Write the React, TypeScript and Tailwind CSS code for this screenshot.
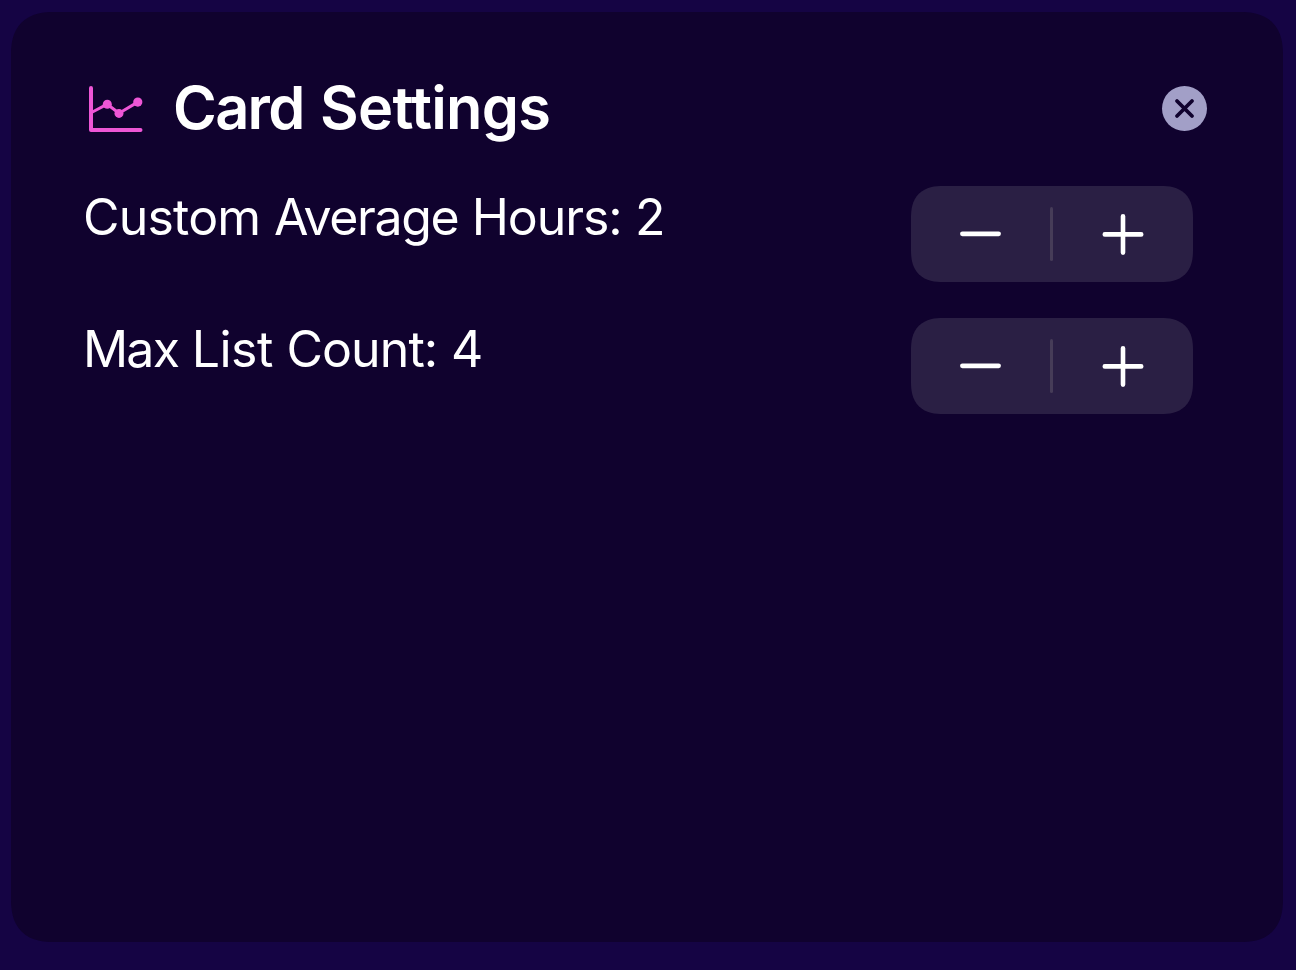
import React from "react";

function ChartIcon() {
  return (
    <svg width="60" height="52" viewBox="86 82 60 52" fill="none" stroke="#ee56d6" strokeLinecap="round" strokeLinejoin="round" aria-hidden="true">
      <path d="M91 88V130H140.5" strokeWidth="4" />
      <path d="M91.5 112.5L107.3 104.2L119 113.3L137.7 102.1" strokeWidth="3" />
      <g fill="#ee56d6" stroke="none">
        <circle cx="107.3" cy="104.2" r="4.5" />
        <circle cx="119" cy="113.4" r="4.5" />
        <circle cx="137.8" cy="102.1" r="4.6" />
      </g>
    </svg>
  );
}

function Stepper({ label }: { label: string }) {
  return (
    <div role="group" aria-label={label} className="flex h-24 w-[282px] items-center rounded-[32px] bg-[#2a1f44] [corner-shape:superellipse(1.3)]">
      <button aria-label="Decrease" className="flex h-full w-[139px] items-center justify-center">
        <svg width="42" height="42" viewBox="0 0 42 42" fill="none" stroke="white" strokeWidth="4.7" strokeLinecap="round">
          <path d="M2.4 20.8H38.6" />
        </svg>
      </button>
      <span className="h-[54px] w-[3px] rounded-full bg-[#463c58]" />
      <button aria-label="Increase" className="flex h-full w-[140px] items-center justify-center">
        <svg width="42" height="42" viewBox="0 0 42 42" fill="none" stroke="white" strokeWidth="4.6" strokeLinecap="round">
          <path d="M2.8 21.4H39.2M21 3.2V39.6" />
        </svg>
      </button>
    </div>
  );
}

function SettingRow({ label, children }: { label: string; children: React.ReactNode }) {
  return (
    <div className="flex h-24 items-start justify-between">
      <span className="-ml-px whitespace-pre text-[50px] leading-[62px] tracking-[-0.5px] text-white">{children}</span>
      <Stepper label={label} />
    </div>
  );
}

export default function App() {
  return (
    <div className="h-[970px] w-[1296px] bg-[#150444] pl-[11px] pt-3 font-['Inter',sans-serif]">
      <main className="h-[930px] w-[1272px] rounded-[43px] bg-[#10022e] pl-[73px] pr-[90px] pt-[59px] [corner-shape:superellipse(1.3)]">
        <header className="-mr-[14px] flex h-[74px] items-center">
          <div className="ml-[2px] mr-[27px]"><ChartIcon /></div>
          <h1 className="-mt-[3px] flex-1 whitespace-nowrap text-[59.5px] font-semibold leading-[74px] tracking-[-0.7px] text-white">
            <span className="tracking-[-1.7px]">Card</span> <span className="ml-[2px]">Settings</span>
          </h1>
          <button aria-label="Close" className="flex size-[45px] items-center justify-center rounded-full bg-[#a29fc7]">
            <svg width="45" height="45" viewBox="0 0 45 45" fill="none" stroke="#10022e" strokeWidth="3.8" strokeLinecap="round">
              <path d="M15 15L30 30M30 15L15 30" />
            </svg>
          </button>
        </header>
        <section className="mt-[41px] flex flex-col gap-9">
          <SettingRow label="Custom Average Hours">
            <span className="tracking-[-0.8px]">Custom</span> <span className="tracking-[-1.4px]">Average</span> <span className="tracking-[-1.1px]">Hours:</span> 2
          </SettingRow>
          <SettingRow label="Max List Count">
            <span className="tracking-[-1.8px]">Max</span> <span>List</span> <span className="tracking-[-0.9px]">Count:</span> 4
          </SettingRow>
        </section>
      </main>
    </div>
  );
}
